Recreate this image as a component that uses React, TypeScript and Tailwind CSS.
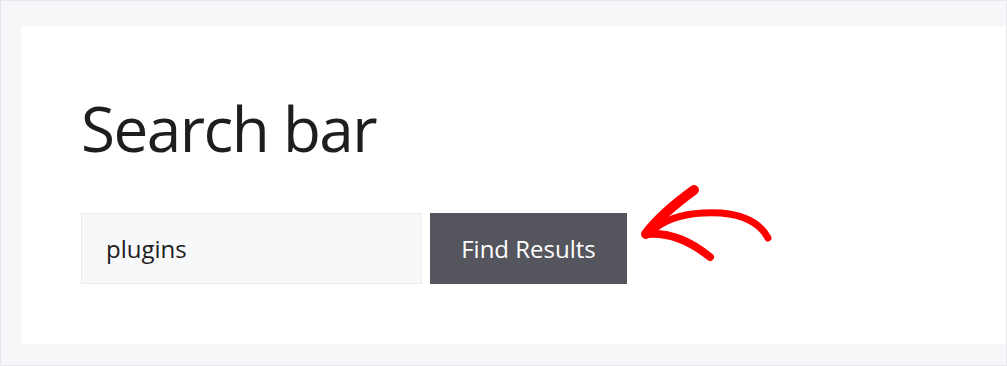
import React from "react";

export default function App() {
  return (
    <div className="relative w-[1007px] h-[366px] border border-[#e6e8eb] bg-[#f6f7f9] pt-[25px] pl-[20px] pb-[21px] overflow-hidden" style={{ fontFamily: '"Open Sans", "Noto Sans", sans-serif' }}>
      <div className="bg-white h-[318px] pl-[60px] pt-[62px]">
        <h1 className="text-[62px] leading-[80px] text-[#1e1e1e] font-normal tracking-[-1.5px]">Search bar</h1>
        <div className="mt-[45px] flex items-center gap-[8px]">
          <div className="w-[341px] h-[71px] border border-[#ececec] bg-[#f7f8fa] pl-[24px] flex items-center text-[24px] text-[#1e1e1e]">plugins</div>
          <div className="w-[197px] h-[71px] bg-[#55555e] flex items-center justify-center text-[24px] text-white">Find Results</div>
        </div>
      </div>
      <svg width="150" height="95" viewBox="630 175 150 95" className="absolute left-[630px] top-[175px]">
        <g fill="none" stroke="#ff0000" strokeLinecap="round" strokeLinejoin="round">
          <path d="M693 189 C675 202 658 216 645 233" strokeWidth="10" />
          <path d="M645 233 C666 231 687 238 709 256" strokeWidth="8" />
          <path d="M656 226 C675 212 700 211 720 212 C745 214 760 224 767 237" strokeWidth="7" />
        </g>
      </svg>
    </div>
  );
}
